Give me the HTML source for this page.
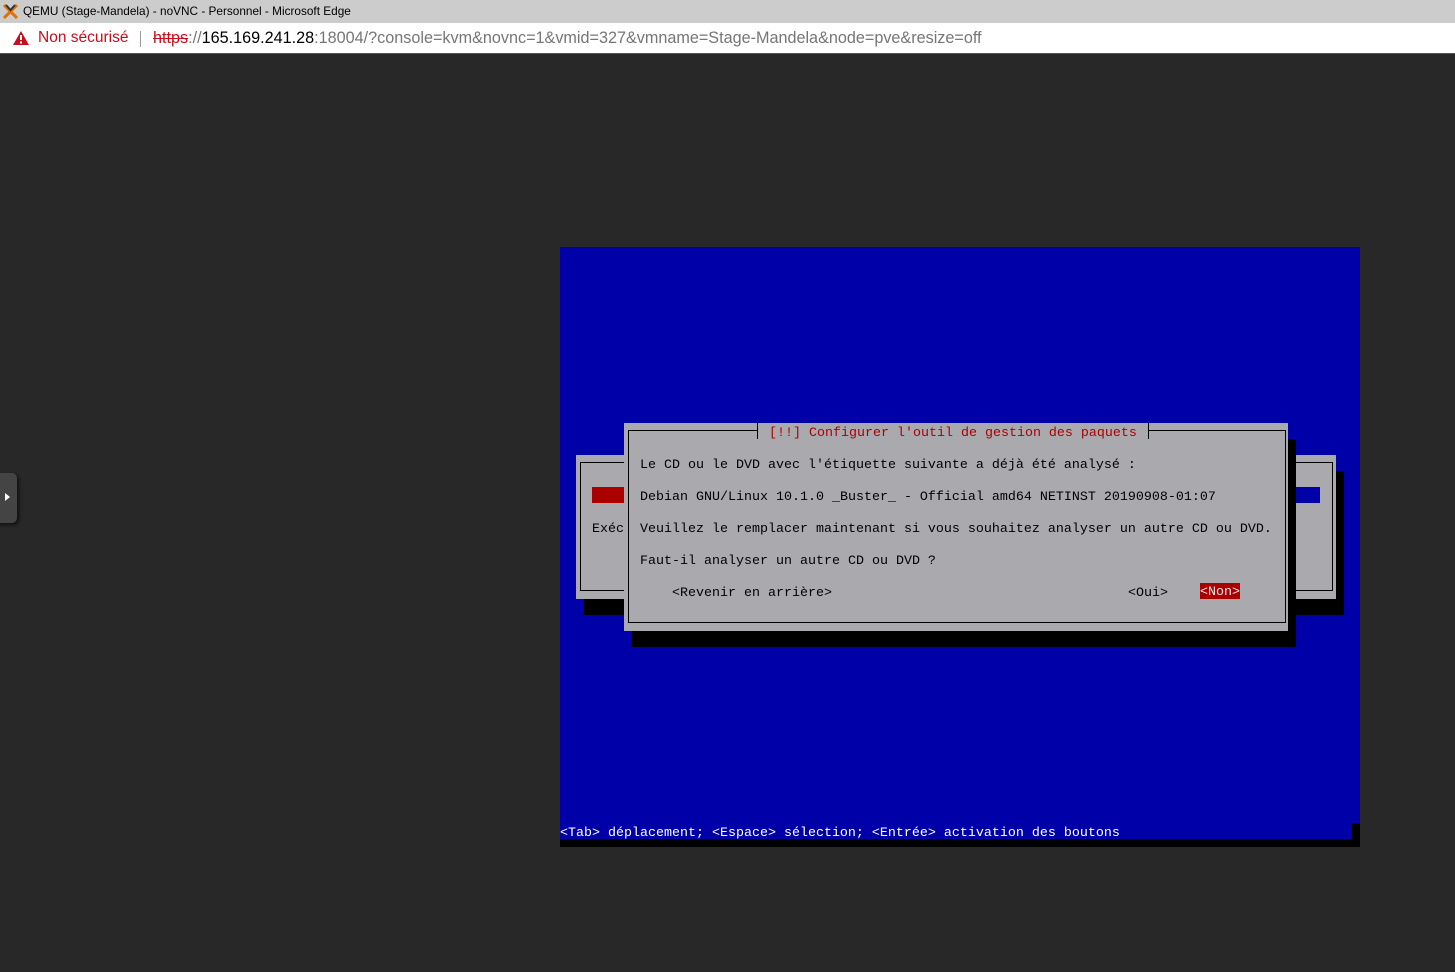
<!DOCTYPE html>
<html><head><meta charset="utf-8"><style>
*{margin:0;padding:0;box-sizing:border-box}
body{width:1455px;height:972px;background:#282828;position:relative;overflow:hidden;font-family:"Liberation Sans",sans-serif}
.a{position:absolute}
.m{font-family:"Liberation Mono",monospace;font-size:13.33px;line-height:16px;white-space:pre;position:absolute}
</style></head><body>
<div class="a" style="left:0;top:0;width:1455px;height:23px;background:#cccccc"></div>
<svg class="a" style="left:3px;top:4px" width="15" height="15" viewBox="0 0 15 15"><path d="M1 1 L14 14 M14 1 L1 14" stroke="#e57000" stroke-width="3"/><path d="M3 1 L7.5 6 L12 1" stroke="#333" stroke-width="2" fill="none"/></svg>
<div class="a" style="left:23px;top:4px;font-size:11.8px;color:#000">QEMU (Stage-Mandela) - noVNC - Personnel - Microsoft Edge</div>
<div class="a" style="left:0;top:23px;width:1455px;height:31px;background:#fff;border-bottom:1px solid #555"></div>
<svg class="a" style="left:13px;top:31px" width="16" height="14" viewBox="0 0 16 14"><path d="M8 0 L16 14 L0 14Z" fill="#c50f1f"/><rect x="7" y="4" width="2" height="5" fill="#fff"/><rect x="7" y="10.5" width="2" height="2" fill="#fff"/></svg>
<div class="a" style="left:38px;top:29px;font-size:15.5px;color:#c50f1f">Non sécurisé</div>
<div class="a" style="left:140px;top:31px;width:1px;height:16px;background:#999"></div>
<div class="a" style="left:153px;top:29px;font-size:16.2px;color:#767676;white-space:pre"><span style="color:#c50f1f;text-decoration:line-through">https</span>://<span style="color:#000">165.169.241.28</span>:18004/?console=kvm&amp;novnc=1&amp;vmid=327&amp;vmname=Stage-Mandela&amp;node=pve&amp;resize=off</div>
<div class="a" style="left:-6px;top:473px;width:23px;height:50px;background:#444;border-radius:5px;box-shadow:2px 2px 3px #111"></div>
<svg class="a" style="left:5px;top:493px" width="6" height="8"><path d="M0 0 L5 4 L0 8Z" fill="#fff"/></svg>

<div class="a" style="left:560px;top:247px;width:800px;height:600px;background:#0000a8"></div>
<div class="a" style="left:1352px;top:823px;width:8px;height:24px;background:#000"></div>
<div class="a" style="left:560px;top:839px;width:800px;height:8px;background:#000"></div>
<div class="m" style="left:560px;top:826px;color:#fff">&lt;Tab&gt; déplacement; &lt;Espace&gt; sélection; &lt;Entrée&gt; activation des boutons</div>

<div class="a" style="left:584px;top:471px;width:760px;height:144px;background:#000"></div>
<div class="a" style="left:576px;top:455px;width:760px;height:144px;background:#aaa9ad"></div>
<div class="a" style="left:580px;top:462px;width:753px;height:129px;border:1px solid #000"></div>
<div class="a" style="left:592px;top:487px;width:32px;height:16px;background:#aa0000"></div>
<div class="a" style="left:1296px;top:487px;width:24px;height:16px;background:#0000a8"></div>
<div class="m" style="left:592px;top:522px;color:#000">Exéc</div>

<div class="a" style="left:632px;top:439px;width:664px;height:208px;background:#000"></div>
<div class="a" style="left:624px;top:423px;width:664px;height:208px;background:#aaa9ad"></div>
<div class="a" style="left:628px;top:430px;width:658px;height:193px;border:1px solid #000"></div>
<div class="a" style="left:757px;top:423px;width:392px;height:16px;background:#aaa9ad;border-left:1px solid #000;border-right:1px solid #000"></div>
<div class="m" style="left:769px;top:426px;color:#aa0000">[!!] Configurer l'outil de gestion des paquets</div>
<div class="m" style="left:640px;top:458px;color:#000">Le CD ou le DVD avec l'étiquette suivante a déjà été analysé :</div>
<div class="m" style="left:640px;top:490px;color:#000">Debian GNU/Linux 10.1.0 _Buster_ - Official amd64 NETINST 20190908-01:07</div>
<div class="m" style="left:640px;top:522px;color:#000">Veuillez le remplacer maintenant si vous souhaitez analyser un autre CD ou DVD.</div>
<div class="m" style="left:640px;top:554px;color:#000">Faut-il analyser un autre CD ou DVD ?</div>
<div class="m" style="left:672px;top:586px;color:#000">&lt;Revenir en arrière&gt;</div>
<div class="m" style="left:1128px;top:586px;color:#000">&lt;Oui&gt;</div>
<div class="a" style="left:1200px;top:583px;width:40px;height:16px;background:#aa0000"></div>
<div class="m" style="left:1200px;top:585px;color:#e8e8e8">&lt;Non&gt;</div>
</body></html>
